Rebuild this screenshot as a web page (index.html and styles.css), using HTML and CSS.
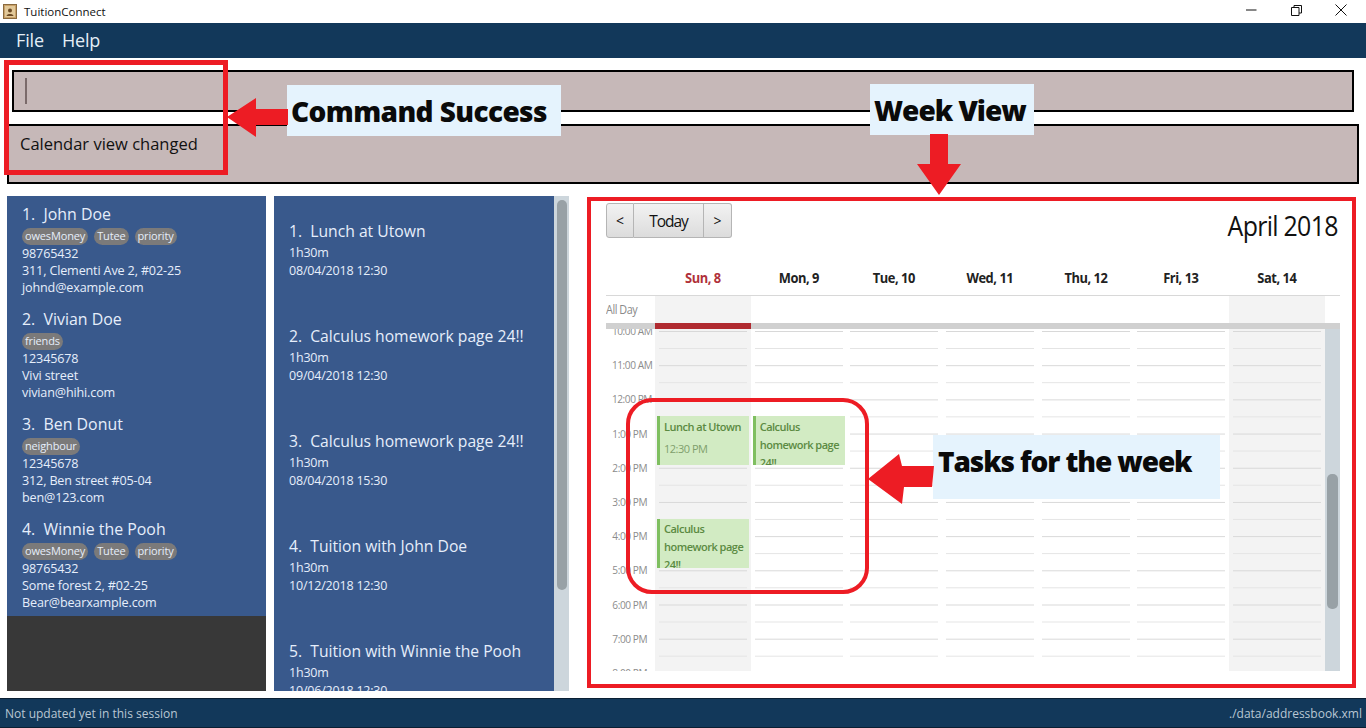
FILE: index.html
```html
<!DOCTYPE html>
<html lang="en">
<head>
<meta charset="utf-8">
<title>TuitionConnect</title>
<link rel="stylesheet" href="styles.css">
</head>
<body>
<div class="app">
  <header class="titlebar">
    <svg class="app-icon" width="14" height="15" viewBox="0 0 14 15"><rect x="0.5" y="0.500" width="13" height="14" fill="#c9a26a" stroke="#8a6a3e"/><rect x="2" y="2" width="10" height="11" fill="#e2c99a"/><circle cx="7" cy="6.500" r="2" fill="#6b4a24"/><path d="M3.500 12c.5-2.600 6.500-2.600 7 0z" fill="#6b4a24"/></svg>
    <span class="app-name">TuitionConnect</span>
    <div class="win-controls">
      <svg width="12" height="12" viewBox="0 0 12 12"><path d="M1 6h10.500" stroke="#111" fill="none"/></svg>
      <svg width="11" height="11" viewBox="0 0 11 11"><path d="M.5 2.500h7.500v8H.5zM3 2.500V.5h7.500v7.500H8" stroke="#111" fill="none"/></svg>
      <svg width="12" height="12" viewBox="0 0 12 12"><path d="M.5.500l11 11M11.500.500l-11 11" stroke="#111" fill="none"/></svg>
    </div>
  </header>
  <nav class="menubar"><span>File</span><span>Help</span></nav>
  <section class="command-area">
    <div class="command-box"><i class="caret"></i></div>
    <div class="result-box">Calendar view changed</div>
  </section>
  <main class="content">
    <div class="people">
      <article class="person">
        <h2>1.&nbsp; John Doe</h2>
        <div class="tags"><span>owesMoney</span><span>Tutee</span><span>priority</span></div>
        <p>98765432</p><p>311, Clementi Ave 2, #02-25</p><p>johnd@example.com</p>
      </article>
      <article class="person">
        <h2>2.&nbsp; Vivian Doe</h2>
        <div class="tags"><span>friends</span></div>
        <p>12345678</p><p>Vivi street</p><p>vivian@hihi.com</p>
      </article>
      <article class="person">
        <h2>3.&nbsp; Ben Donut</h2>
        <div class="tags"><span>neighbour</span></div>
        <p>12345678</p><p>312, Ben street #05-04</p><p>ben@123.com</p>
      </article>
      <article class="person">
        <h2>4.&nbsp; Winnie the Pooh</h2>
        <div class="tags"><span>owesMoney</span><span>Tutee</span><span>priority</span></div>
        <p>98765432</p><p>Some forest 2, #02-25</p><p>Bear@bearxample.com</p>
      </article>
    </div>
    <div class="tasks-wrap">
      <div class="tasks">
        <article class="task"><h2>1.&nbsp; Lunch at Utown</h2><p>1h30m</p><p>08/04/2018 12:30</p></article>
        <article class="task"><h2>2.&nbsp; Calculus homework page 24!!</h2><p>1h30m</p><p>09/04/2018 12:30</p></article>
        <article class="task"><h2>3.&nbsp; Calculus homework page 24!!</h2><p>1h30m</p><p>08/04/2018 15:30</p></article>
        <article class="task"><h2>4.&nbsp; Tuition with John Doe</h2><p>1h30m</p><p>10/12/2018 12:30</p></article>
        <article class="task"><h2>5.&nbsp; Tuition with Winnie the Pooh</h2><p>1h30m</p><p>10/06/2018 12:30</p></article>
      </div>
      <div class="task-scroll"><i></i></div>
    </div>
    <section class="calendar">
      <div class="cal-top">
        <div class="cal-nav"><button>&lt;</button><button class="today">Today</button><button>&gt;</button></div>
        <div class="cal-month">April 2018</div>
      </div>
      <div class="cal-head">
        <span></span><span class="now">Sun, 8</span><span>Mon, 9</span><span>Tue, 10</span><span>Wed, 11</span><span>Thu, 12</span><span>Fri, 13</span><span>Sat, 14</span>
      </div>
      <div class="cal-allday">
        <span class="allday-label">All Day</span><i class="shade"></i><i></i><i></i><i></i><i></i><i></i><i class="shade"></i><i></i>
      </div>
      <div class="cal-divider"><i></i></div>
      <div class="cal-body">
        <div class="times">
          <span>10:00 AM</span><span>11:00 AM</span><span>12:00 PM</span><span>1:00 PM</span><span>2:00 PM</span><span>3:00 PM</span><span>4:00 PM</span><span>5:00 PM</span><span>6:00 PM</span><span>7:00 PM</span><span>8:00 PM</span>
        </div>
        <div class="day shade">
          <div class="event ev-a"><b>Lunch at Utown</b><em>12:30 PM</em></div>
          <div class="event ev-b"><b>Calculus homework page 24!!</b></div>
        </div>
        <div class="day">
          <div class="event ev-a"><b>Calculus homework page 24!!</b></div>
        </div>
        <div class="day"></div><div class="day"></div><div class="day"></div><div class="day"></div>
        <div class="day shade"></div>
        <div class="cal-scroll"><i></i></div>
      </div>
    </section>
  </main>
  <footer class="statusbar"><span>Not updated yet in this session</span><span>./data/addressbook.xml</span></footer>

  <div class="note box-cmd"></div>
  <div class="note label label-cmd">Command Success</div>
  <svg class="note arrow-cmd" width="62" height="40" viewBox="0 0 62 40"><path d="M1 19L30 0v11h32v16H30v12z" fill="#ed1c24"/></svg>
  <div class="note label label-week">Week View</div>
  <svg class="note arrow-week" width="44" height="62" viewBox="0 0 44 62"><path d="M13 0h18v30h13L22 61 0 30h13z" fill="#ed1c24"/></svg>
  <div class="note box-tasks"></div>
  <div class="note label label-tasks">Tasks for the week</div>
  <svg class="note arrow-tasks" width="66" height="50" viewBox="0 0 66 50"><path d="M0 25L31 0l3 12h32l-2 21H36l-2 17z" fill="#ed1c24"/></svg>
</div>
</body>
</html>
```
FILE: styles.css
```css
* { box-sizing: border-box; }
html, body { margin: 0; height: 100%; overflow: hidden; }
body { font-family: "Open Sans", "Noto Sans", sans-serif; background: #fff; }
h2, p { margin: 0; font-weight: 400; }

.app { position: relative; width: 1366px; height: 728px; display: flex; flex-direction: column; }

.titlebar { height: 23px; flex: none; display: flex; align-items: center; padding-left: 3px; font-size: 11.500px; color: #111; }
.app-icon { margin-right: 7px; }
.win-controls { margin-left: auto; width: 121px; display: flex; align-items: center; justify-content: space-between; padding: 0 19px 3px 0; }

.menubar { height: 35px; flex: none; background: #12385a; color: #e4eef6; font-size: 18px; display: flex; align-items: center; gap: 18px; padding: 0 0 2px 16px; letter-spacing: -.15px; }

.command-area { flex: none; height: 138px; padding: 12px 7px 0; display: flex; flex-direction: column; gap: 12px; }
.command-box { height: 42px; margin: 0 5px; border: 2px solid #000; background: #c6b8b8; display: flex; align-items: center; padding-left: 11px; }
.caret { width: 2px; height: 26px; background: #7a6a6a; }
.result-box { height: 60px; border: 2px solid #000; background: #c6b8b8; padding: 6px 11px; font-size: 16.500px; color: #111; }

.content { flex: none; height: 495px; padding-left: 7px; display: flex; }

.people { width: 259px; flex: none; background: #383838; }
.person { height: 105px; background: #39598c; padding: 8px 15px 0; color: #e6eefb; font-size: 12.600px; line-height: 17px; letter-spacing: -.15px; }
.person h2 { font-size: 15.900px; line-height: 21px; letter-spacing: 0; }
.tags { display: flex; gap: 6px; height: 17px; margin-top: 3px; }
.tags span { background: #7b7a7a; border-radius: 9px; padding: 0 3px; font-size: 11px; line-height: 16px; height: 17px; letter-spacing: -.15px; }

.tasks-wrap { margin-left: 8px; width: 295px; flex: none; display: flex; height: 495px; }
.tasks { width: 280px; flex: none; background: #39598c; overflow: hidden; color: #e6eefb; }
.task { height: 105px; padding: 25px 15px 0; font-size: 12.500px; line-height: 18px; letter-spacing: -.2px; }
.task h2 { font-size: 15.700px; line-height: 21px; margin-bottom: 2px; letter-spacing: 0; }
.task-scroll { width: 15px; background: #cdd6dc; padding: 4px 2px 0 3px; }
.task-scroll i { display: block; height: 390px; background: #98a1a6; border-radius: 5px; }

.calendar { margin-left: 18px; margin-top: 1px; width: 769px; height: 491px; flex: none; border: 4px solid #ed1c24; padding: 2px 15px 0; display: flex; flex-direction: column; background: #fff; }
.cal-top { height: 36px; flex: none; display: flex; justify-content: space-between; }
.cal-nav { display: flex; height: 35px; }
.cal-nav button { width: 28px; font: 400 14px "Open Sans", sans-serif; color: #111; border: 1px solid #b5b5b5; border-left-width: 0; background: linear-gradient(#f2f2f2, #dcdcdc); padding: 0; }
.cal-nav button:first-child { border-left-width: 1px; border-radius: 3px 0 0 3px; }
.cal-nav button:last-child { border-radius: 0 3px 3px 0; }
.cal-nav .today { width: 70px; font-size: 15.500px; letter-spacing: -1px; }
.cal-month { font-size: 28px; line-height: 44px; letter-spacing: -.8px; color: #111; margin-right: -1px; transform: scaleX(.89); transform-origin: right center; }

.cal-head { margin-top: 21px; height: 36px; flex: none; width: 734px; display: grid; grid-template-columns: 49px repeat(7, 95.7px) 15px; align-items: center; border-bottom: 1px solid #d8d8d8; font-size: 14px; font-weight: 700; text-align: center; color: #222; letter-spacing: -.5px; }
.cal-head span { transform: scaleX(.92); }
.cal-head .now { color: #b0313a; }

.cal-allday { height: 27px; flex: none; width: 734px; display: grid; grid-template-columns: 49px repeat(7, 95.7px) 15px; }
.allday-label { font-size: 12px; color: #8a8a8a; line-height: 28px; letter-spacing: -.5px; transform: scaleX(.9); transform-origin: left center; }
.shade { background-color: #f3f3f3; }

.cal-divider { height: 6px; flex: none; width: 734px; background: #d0d0d0; padding-left: 49px; }
.cal-divider i { display: block; width: 95.7px; height: 6px; background: #b02a30; }

.cal-body { width: 734px; height: 342px; flex: none; overflow: hidden; display: grid; grid-template-columns: 49px repeat(7, 95.7px) 15px; }
.times { margin-top: -15px; }
.times span { display: block; height: 34.200px; line-height: 34.200px; font-size: 11.500px; color: #8c8c8c; text-align: right; padding-right: 9px; letter-spacing: -.5px; white-space: nowrap; transform: scaleX(.88); transform-origin: right center; }

.day {
  position: relative;
  height: 342px;
  background-image:
    linear-gradient(#d8d8d8 1px, transparent 1px),
    linear-gradient(#e4e4e4 1px, transparent 1px);
  background-size: 88px 34.200px, 88px 34.200px;
  background-position: 4px 2px, 4px 19px;
  background-repeat: repeat-y;
}
.event { position: absolute; left: 2px; width: 92px; height: 49px; background: #d2ebc3; border-left: 3px solid #7fbf60; padding: 2px 2px 0 4px; overflow: hidden; color: #5b8a42; font-size: 11px; line-height: 18px; letter-spacing: -.5px; }
.event b { display: block; font-weight: 600; }
.event em { display: block; font-style: normal; font-weight: 400; margin-top: 4px; color: #7f9f6c; }
.ev-a { top: 87px; }
.ev-b { top: 190px; padding-top: 1px; }

.cal-scroll { background: #cdd6dc; padding: 145px 2px 0; }
.cal-scroll i { display: block; height: 135px; background: #98a1a6; border-radius: 5px; }

.statusbar { margin-top: 7px; height: 30px; flex: 1; background: #12385a; border-top: 1px solid #0a1f33; border-bottom: 1px solid #0a1f33; color: #b9c7d4; font-size: 12px; display: flex; align-items: center; justify-content: space-between; padding: 0 4px 0 5px; }

.note { position: absolute; }
.box-cmd { left: 4px; top: 60px; width: 224px; height: 115px; border: 5px solid #ed1c24; }
.label { background: #e5f3fd; color: #0a0a0a; font-weight: 800; font-size: 28px; display: flex; align-items: center; letter-spacing: -.6px; white-space: nowrap; }
.label-cmd { left: 287px; top: 85px; width: 274px; height: 51px; padding-left: 4px; }
.arrow-cmd { left: 226px; top: 98px; }
.label-week { left: 870px; top: 84px; width: 164px; height: 51px; padding-left: 4px; letter-spacing: -1px; }
.arrow-week { left: 917px; top: 134px; }
.box-tasks { left: 626px; top: 398px; width: 243px; height: 196px; border: 4px solid #ed1c24; border-radius: 26px; }
.label-tasks { left: 933px; top: 435px; width: 287px; height: 64px; padding: 0 0 13px 5px; letter-spacing: -1.100px; }
.arrow-tasks { left: 868px; top: 454px; }
```
